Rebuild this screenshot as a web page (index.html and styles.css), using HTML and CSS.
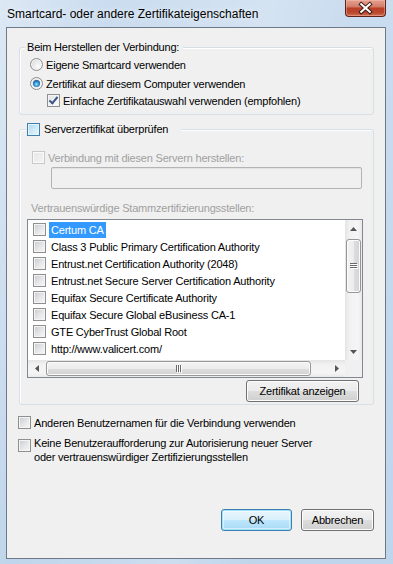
FILE: index.html
```html
<!DOCTYPE html>
<html lang="de">
  <head>
    <meta charset="UTF-8" />
    <meta name="viewport" content="width=device-width, initial-scale=1.0" />
    <title>Smartcard- oder andere Zertifikateigenschaften</title>
    <link rel="stylesheet" href="styles.css">
  </head>
  <body>
    <div class="window">
      <div class="titlebar">
        <span class="title">Smartcard- oder andere Zertifikateigenschaften</span>
        <button class="close-btn" aria-label="Schließen">
          <svg width="41" height="17" viewBox="0 0 41 17">
            <path d="M16 4 L25 12 M25 4 L16 12" stroke="#3b1812" stroke-width="4.2" stroke-linecap="square" />
            <path d="M16 4 L25 12 M25 4 L16 12" stroke="#ffffff" stroke-width="2.2" stroke-linecap="square" />
          </svg>
        </button>
      </div>

      <div class="client">
        <div class="group group-conn">
          <div class="legend">Beim Herstellen der Verbindung:</div>
          <div class="row opt first"><span class="radio"></span>Eigene Smartcard verwenden</div>
          <div class="row opt second"><span class="radio on"></span>Zertifikat auf diesem Computer verwenden</div>
          <div class="row sub"><span class="check on"></span>Einfache Zertifikatauswahl verwenden (empfohlen)</div>
        </div>

        <div class="group group-server">
          <div class="legend legend-check"><span class="check hot"></span>Serverzertifikat überprüfen</div>
          <div class="row servers disabled"><span class="check dis"></span>Verbindung mit diesen Servern herstellen:</div>
          <div class="textbox"></div>
          <div class="caption disabled">Vertrauenswürdige Stammzertifizierungsstellen:</div>

          <div class="listbox">
            <div class="list-main">
              <ul class="items" id="caList"></ul>
              <div class="vscroll">
                <div class="arrow-btn">
                  <svg width="7" height="4" viewBox="0 0 7 4"><path d="M0 4h7L3.5 0z" fill="#555" /></svg>
                </div>
                <div class="vthumb">
                  <svg width="8" height="6" viewBox="0 0 8 6">
                    <rect x="0" y="0" width="7" height="1" fill="#6a6a6a" />
                    <rect x="0" y="2" width="7" height="1" fill="#6a6a6a" />
                    <rect x="0" y="4" width="7" height="1" fill="#6a6a6a" />
                    <rect x="1" y="1" width="7" height="1" fill="#fff" />
                    <rect x="1" y="3" width="7" height="1" fill="#fff" />
                    <rect x="1" y="5" width="7" height="1" fill="#fff" />
                  </svg>
                </div>
                <div class="arrow-btn bottom">
                  <svg width="7" height="4" viewBox="0 0 7 4"><path d="M0 0h7L3.5 4z" fill="#555" /></svg>
                </div>
              </div>
            </div>
            <div class="hscroll-row">
              <div class="hscroll">
                <div class="arrow-btn side">
                  <svg width="4" height="7" viewBox="0 0 4 7"><path d="M4 0v7L0 3.5z" fill="#555" /></svg>
                </div>
                <div class="hthumb">
                  <svg width="6" height="8" viewBox="0 0 6 8">
                    <rect x="0" y="0" width="1" height="7" fill="#6a6a6a" />
                    <rect x="2" y="0" width="1" height="7" fill="#6a6a6a" />
                    <rect x="4" y="0" width="1" height="7" fill="#6a6a6a" />
                    <rect x="1" y="1" width="1" height="7" fill="#fff" />
                    <rect x="3" y="1" width="1" height="7" fill="#fff" />
                    <rect x="5" y="1" width="1" height="7" fill="#fff" />
                  </svg>
                </div>
                <div class="arrow-btn side right">
                  <svg width="4" height="7" viewBox="0 0 4 7"><path d="M0 0v7L4 3.5z" fill="#555" /></svg>
                </div>
              </div>
              <div class="corner"></div>
            </div>
          </div>

          <div class="btn-row">
            <button class="btn btn-cert">Zertifikat anzeigen</button>
          </div>
        </div>

        <div class="row outer"><span class="check"></span>Anderen Benutzernamen für die Verbindung verwenden</div>
        <div class="row outer two">
          <span class="check"></span>
          <span>Keine Benutzeraufforderung zur Autorisierung neuer Server<br />oder vertrauenswürdiger Zertifizierungsstellen</span>
        </div>

        <div class="actions">
          <button class="btn btn-default">OK</button>
          <button class="btn btn-cancel">Abbrechen</button>
        </div>
      </div>
    </div>

    <script>
      const authorities = [
        "Certum CA",
        "Class 3 Public Primary Certification Authority",
        "Entrust.net Certification Authority (2048)",
        "Entrust.net Secure Server Certification Authority",
        "Equifax Secure Certificate Authority",
        "Equifax Secure Global eBusiness CA-1",
        "GTE CyberTrust Global Root",
        "http://www.valicert.com/",
      ];

      const caList = document.getElementById("caList");
      authorities.forEach(function (name, i) {
        const li = document.createElement("li");
        li.className = "item";
        li.innerHTML = `<span class="check"></span><span class="item-text${i === 0 ? " selected" : ""}">${name}</span>`;
        caList.appendChild(li);
      });
    </script>
  </body>
</html>
```

FILE: styles.css
```css
* {
  margin: 0;
  padding: 0;
  box-sizing: border-box;
}
body {
  font-family: "Liberation Sans", Arial, sans-serif;
  font-size: 11px;
  letter-spacing: -0.2px;
  color: #000;
  background: #c3d7ec;
  width: 393px;
  height: 564px;
  overflow: hidden;
}
.window {
  width: 393px;
  height: 564px;
  display: flex;
  flex-direction: column;
  background: linear-gradient(100deg, rgba(255, 255, 255, 0.35) 0%, rgba(255, 255, 255, 0) 22%, rgba(255, 255, 255, 0.2) 55%, rgba(255, 255, 255, 0) 72%),
    linear-gradient(180deg, #cadcef 0%, #bfd5eb 100%);
}
.titlebar {
  height: 27px;
  display: flex;
  align-items: center;
  padding-left: 7px;
  position: relative;
}
.title {
  font-size: 12px;
  letter-spacing: 0;
  line-height: 26px;
  text-shadow: 0 0 6px rgba(255, 255, 255, 0.9);
}
.close-btn {
  position: absolute;
  top: 0;
  right: 7px;
  width: 41px;
  height: 17px;
  border: 1px solid #5e2218;
  border-top: none;
  border-radius: 0 0 4px 4px;
  background: linear-gradient(180deg, #e5a190 0%, #d4806b 40%, #bb3f27 52%, #b9492f 80%, #d27354 100%);
  box-shadow: inset 0 0 0 1px rgba(255, 200, 190, 0.4);
  display: flex;
  align-items: center;
  justify-content: center;
}
.close-btn svg {
  display: block;
}

.client {
  margin: 0 7px 5px 6px;
  height: 532px;
  border: 1px solid #6d7986;
  background: #f0f0f0;
  display: flex;
  flex-direction: column;
}

.group {
  width: 355px;
  margin-left: 12px;
  border: 1px solid #d5dfe5;
  border-radius: 3px;
  box-shadow: inset 1px 1px 0 #fff;
  display: flex;
  flex-direction: column;
}
.group-conn {
  margin-top: 19px;
  padding-bottom: 5px;
}
.group-server {
  margin-top: 14px;
  padding-bottom: 2px;
}
.legend {
  align-self: flex-start;
  height: 15px;
  line-height: 15px;
  margin: -8px 0 0 5px;
  padding: 0 4px 0 2px;
  background: #f0f0f0;
  display: flex;
  align-items: center;
}
.legend-check {
  margin-left: 6px;
  padding: 0 13px 0 1px;
  gap: 4px;
}

.row {
  height: 17px;
  display: flex;
  align-items: center;
  gap: 3px;
  white-space: nowrap;
}
.opt {
  padding-left: 10px;
}
.opt.first {
  margin-top: 1px;
}
.opt.second {
  margin-top: 2px;
}
.sub {
  padding-left: 27px;
}
.servers {
  margin-top: 12px;
  padding-left: 12px;
}
.disabled {
  color: #a0a0a0;
}
.outer {
  padding-left: 11px;
  margin-top: 9px;
}
.outer.two {
  height: auto;
  margin-top: 5px;
  align-items: flex-start;
  line-height: 14px;
}
.outer.two .check {
  margin-top: 3px;
}

.textbox {
  width: 311px;
  height: 22px;
  margin: 1px 0 0 31px;
  border: 1px solid #b4b4b4;
  border-radius: 2px;
  background: #f0f0f0;
  box-shadow: inset 0 1px 0 #e2e2e2;
}
.caption {
  height: 15px;
  line-height: 15px;
  margin-top: 12px;
  padding-left: 11px;
}

.check {
  flex: none;
  width: 13px;
  height: 13px;
  border: 1px solid #8f8f8f;
  background: linear-gradient(135deg, #c6cacf 0%, #e6e7e9 55%, #f8f8f8 100%);
  box-shadow: inset 0 0 0 1px #f4f4f4;
  position: relative;
}
.check.on {
  background: linear-gradient(135deg, #dfe1e4 0%, #f2f2f3 60%, #fcfcfc 100%);
}
.check.on::after {
  content: "";
  position: absolute;
  left: 3px;
  top: 0px;
  width: 3px;
  height: 7px;
  border: solid #3d5686;
  border-width: 0 2px 2px 0;
  transform: rotate(40deg);
}
.check.hot {
  border-color: #3c7fb1;
  background: linear-gradient(135deg, #a9d8f1 0%, #cfeaf8 55%, #eaf7fd 100%);
  box-shadow: inset 0 0 0 1px #e3f4fc;
}
.check.dis {
  border-color: #c8c8c8;
  background: linear-gradient(135deg, #e6e6e6 0%, #f4f4f4 100%);
  box-shadow: inset 0 0 0 1px #fafafa;
}

.radio {
  flex: none;
  width: 13px;
  height: 13px;
  border-radius: 50%;
  border: 1px solid #8d8d8d;
  background: radial-gradient(circle at 65% 65%, #fbfbfb 0%, #e4e5e7 55%, #c3c6ca 100%);
  box-shadow: inset 0 0 0 1px #f6f6f6;
  position: relative;
}
.radio.on::after {
  content: "";
  position: absolute;
  left: 2px;
  top: 2px;
  width: 7px;
  height: 7px;
  border-radius: 50%;
  background: radial-gradient(circle at 50% 60%, #9fe4ff 0%, #3aa0dc 35%, #14508f 75%, #0b325f 100%);
}

.listbox {
  width: 336px;
  height: 159px;
  margin: 3px 0 0 7px;
  border: 1px solid #828790;
  background: #fff;
  display: flex;
  flex-direction: column;
}
.list-main {
  flex: 1;
  display: flex;
  min-height: 0;
}
.items {
  flex: 1;
  list-style: none;
  padding-top: 1px;
  overflow: hidden;
}
.item {
  height: 17px;
  display: flex;
  align-items: center;
  padding-left: 5px;
  white-space: nowrap;
}
.item-text {
  margin-left: 3px;
  padding: 0 2px;
  height: 16px;
  line-height: 16px;
}
.item-text.selected {
  background: #3399ff;
  color: #fff;
}

.vscroll {
  width: 17px;
  display: flex;
  flex-direction: column;
  background: linear-gradient(90deg, #e4e4e4 0%, #f1f1f1 25%, #f5f5f5 75%, #e9e9e9 100%);
}
.arrow-btn {
  height: 17px;
  flex: none;
  display: flex;
  align-items: center;
  justify-content: center;
}
.arrow-btn.bottom {
  margin-top: auto;
}
.vthumb {
  height: 54px;
  margin: 2px 1px 0;
  border: 1px solid #979797;
  border-radius: 3px;
  background: linear-gradient(90deg, #f4f4f4 0%, #ececec 50%, #dedede 51%, #d2d2d2 100%);
  box-shadow: inset 0 0 0 1px #fbfbfb;
  display: flex;
  align-items: center;
  justify-content: center;
}
.hscroll-row {
  height: 17px;
  display: flex;
}
.hscroll {
  flex: 1;
  display: flex;
  background: linear-gradient(180deg, #e4e4e4 0%, #f1f1f1 25%, #f5f5f5 75%, #e9e9e9 100%);
}
.arrow-btn.side {
  width: 17px;
  height: 17px;
}
.arrow-btn.right {
  margin-left: auto;
}
.hthumb {
  width: 265px;
  margin: 1px 0 1px 1px;
  border: 1px solid #979797;
  border-radius: 3px;
  background: linear-gradient(180deg, #f4f4f4 0%, #ececec 50%, #dedede 51%, #d2d2d2 100%);
  box-shadow: inset 0 0 0 1px #fbfbfb;
  display: flex;
  align-items: center;
  justify-content: center;
}
.corner {
  width: 17px;
  background: #f0f0f0;
}

.btn-row {
  display: flex;
  justify-content: flex-end;
  margin-top: 2px;
  padding-right: 14px;
}
.btn {
  height: 22px;
  padding: 0;
  white-space: nowrap;
  font-family: inherit;
  font-size: 11px;
  letter-spacing: -0.2px;
  color: #000;
  border: 1px solid #707070;
  border-radius: 3px;
  background: linear-gradient(180deg, #f2f2f2 0%, #ebebeb 48%, #dddddd 52%, #cfcfcf 100%);
  box-shadow: inset 0 0 0 1px #fcfcfc;
}
.btn-cert {
  width: 113px;
}
.actions {
  margin-top: auto;
  margin-bottom: 27px;
  padding-right: 11px;
  display: flex;
  justify-content: flex-end;
  gap: 9px;
}
.btn-default {
  width: 71px;
  border-color: #3c7fb1;
  background: linear-gradient(180deg, #eaf6fd 0%, #d9f0fc 48%, #bee6fd 52%, #a7d9f5 100%);
  box-shadow: inset 0 0 0 1px #9ee2f8, inset 0 0 0 2px rgba(255, 255, 255, 0.5);
}
.btn-cancel {
  width: 73px;
}
```
